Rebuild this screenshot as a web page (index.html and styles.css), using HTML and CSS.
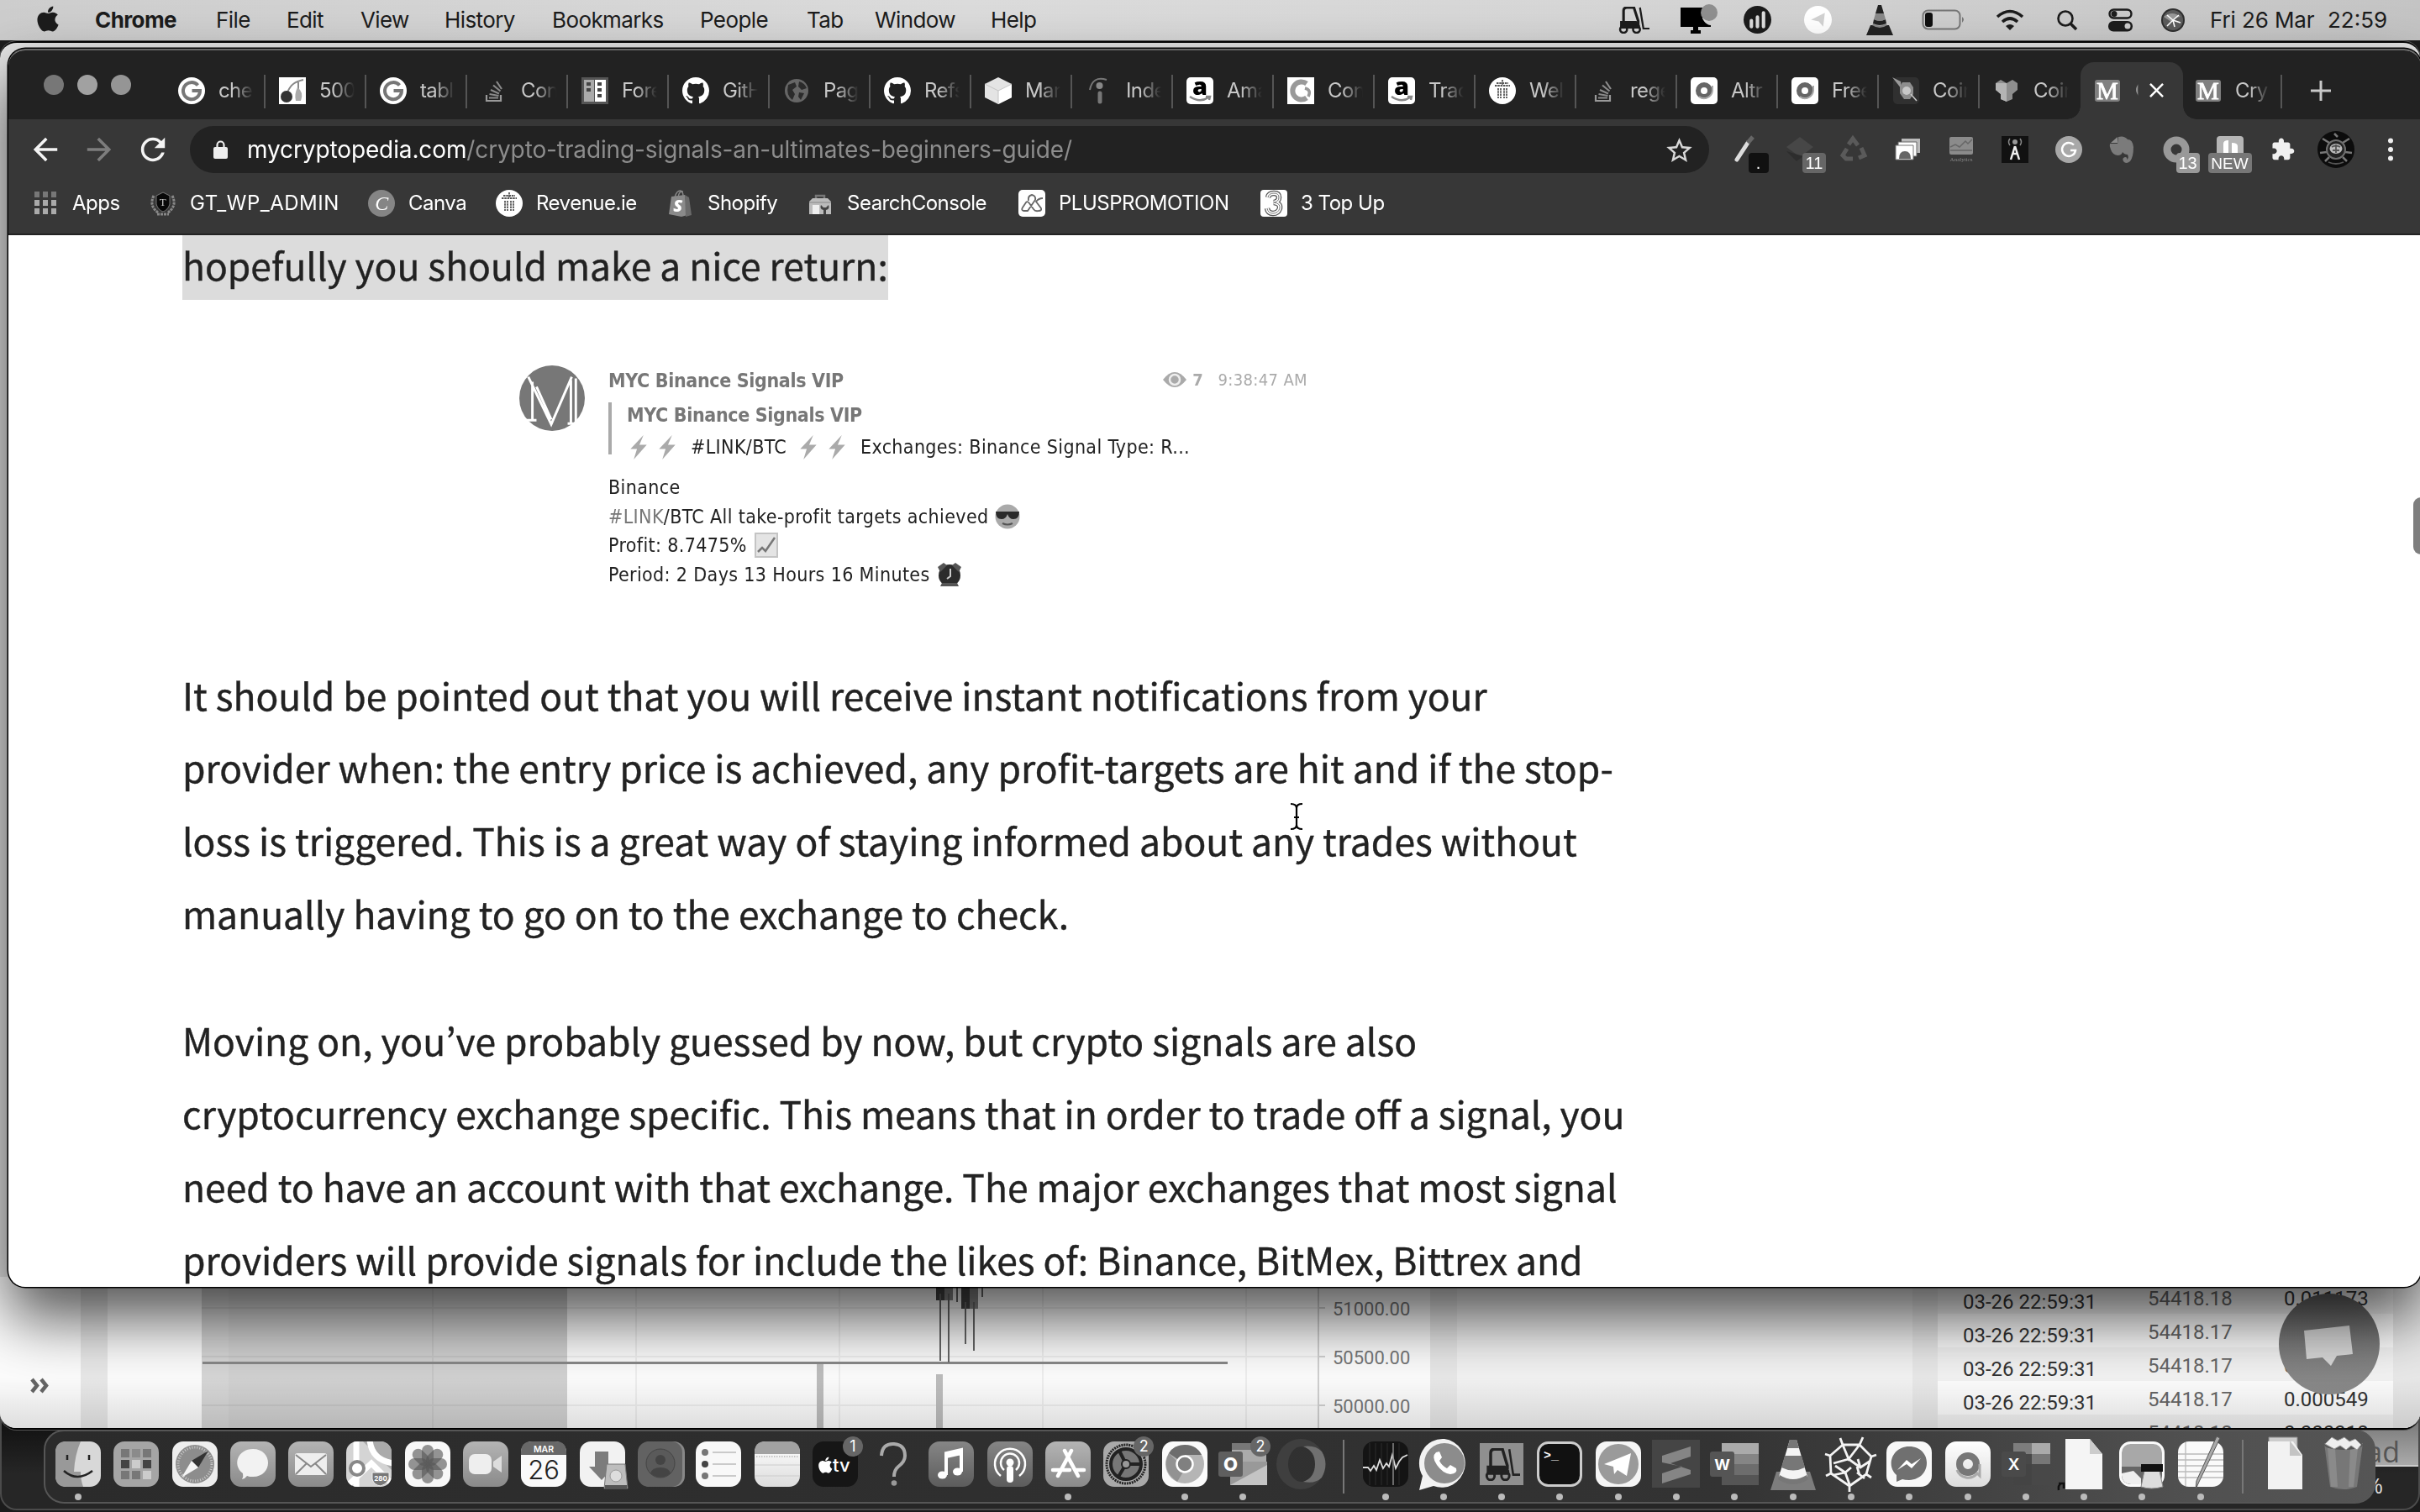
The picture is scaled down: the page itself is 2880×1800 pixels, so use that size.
FILE: index.html
```html
<!DOCTYPE html>
<html lang="en">
<head>
<meta charset="utf-8">
<title>Crypto Trading Signals</title>
<link rel="stylesheet" href="styles.css">
</head>
<body>
<svg class="defs" width="0" height="0">
<defs>
<linearGradient id="gTile" x1="0" y1="0" x2="0" y2="1"><stop offset="0" stop-color="#b4b4b4"/><stop offset="1" stop-color="#8a8a8a"/></linearGradient>
<linearGradient id="gMid" x1="0" y1="0" x2="0" y2="1"><stop offset="0" stop-color="#868686"/><stop offset="1" stop-color="#5c5c5c"/></linearGradient>
<linearGradient id="gLight" x1="0" y1="0" x2="0" y2="1"><stop offset="0" stop-color="#fff"/><stop offset="1" stop-color="#dcdcdc"/></linearGradient>
<linearGradient id="gChat" x1="0" y1="0" x2="0" y2="1"><stop offset="0" stop-color="#5e5e5e"/><stop offset=".5" stop-color="#7b7b7b"/><stop offset="1" stop-color="#8c8c8c"/></linearGradient>
<path id="apple" d="M318.7 268.7c-.2-36.7 16.4-64.4 50-84.8-18.8-26.9-47.2-41.7-84.7-44.6-35.5-2.8-74.3 20.7-88.5 20.7-15 0-49.4-19.7-76.4-19.7C63.3 141.2 4 184.8 4 273.5q0 39.3 14.4 81.2c12.8 36.7 59 126.7 107.2 125.2 25.2-.6 43-17.9 75.8-17.9 31.8 0 48.3 17.9 76.4 17.9 48.6-.7 90.4-82.5 102.6-119.3-65.2-30.7-61.7-90-61.7-91.9zm-56.6-164.2c27.3-32.4 24.8-61.9 24-72.5-24.1 1.4-52 16.4-67.9 34.9-17.5 19.8-27.8 44.3-25.6 71.9 26.1 2 49.9-11.4 69.5-34.3z"/>
<symbol id="f-google" viewBox="0 0 32 32"><circle cx="16" cy="16" r="16" fill="#fff"/><path d="M23.5 9.5A10 10 0 1 0 26 16h-9.500" fill="none" stroke="#777" stroke-width="4"/></symbol>
<symbol id="f-cherry" viewBox="0 0 32 32"><path fill="#fff" d="M0 0h32v32H0z"/><path d="M10 18C14 8 20 5 29 3M23 6v14" fill="none" stroke="#888" stroke-width="2"/><circle cx="9" cy="23" r="7" fill="#333"/><path d="M22 12q8 6 4 16h-6q-2-8 2-16z" fill="#aaa"/></symbol>
<symbol id="f-stack" viewBox="0 0 32 32"><path d="M7 21v7h17v-7" fill="none" stroke="#999" stroke-width="2.200"/><path d="M10 24.500h11M10.500 20l11 2M12 15l10 4.500M15 9.500l8.500 7M19 5l6 9" stroke="#8a8a8a" stroke-width="2.200"/></symbol>
<symbol id="f-forex" viewBox="0 0 32 32"><path fill="#555" d="M0 0h32v32H0z"/><path fill="#aaa" d="M3 3h12v26H3z"/><path fill="#fff" d="M16 3h13v26H16z"/><path fill="#444" d="M6 6h5v4H6zM6 13h5v4H6zM19 6h5v4h-5zM19 13h5v4h-5zM19 20h5v4h-5z"/></symbol>
<symbol id="f-github" viewBox="0 0 16 16"><path fill="#fff" d="M8 0C3.580 0 0 3.580 0 8c0 3.540 2.290 6.530 5.470 7.590.4.070.55-.17.55-.38 0-.19-.01-.82-.01-1.490-2.010.37-2.530-.49-2.690-.94-.09-.23-.48-.94-.82-1.130-.28-.15-.68-.52-.01-.53.63-.01 1.080.58 1.230.82.72 1.210 1.870.87 2.330.66.070-.52.28-.87.510-1.070-1.780-.2-3.640-.89-3.640-3.950 0-.87.31-1.590.82-2.150-.08-.2-.36-1.020.080-2.120 0 0 .67-.21 2.200.82.64-.18 1.320-.27 2-.27s1.360.090 2 .27c1.530-1.040 2.200-.82 2.200-.82.44 1.100.160 1.920.080 2.120.51.560.82 1.270.82 2.150 0 3.070-1.870 3.750-3.650 3.950.29.25.54.73.54 1.480 0 1.070-.01 1.930-.01 2.200 0 .21.15.46.55.38A8.010 8.010 0 0 0 16 8c0-4.420-3.580-8-8-8z"/></symbol>
<symbol id="f-globe" viewBox="0 0 32 32"><circle cx="16" cy="16" r="14" fill="#666"/><path d="M6 9l8-3 2 5-5 4 3 5-3 7q-8-6-5-18zM19 5q7 2 9 8l-6 2-4-4zM19 18l6 1-4 8-3-4z" fill="#2b2b2b"/></symbol>
<symbol id="f-cube" viewBox="0 0 32 32"><path d="M16 0l16 8v16l-16 8L0 24V8z" fill="#e4e4e4"/><path d="M16 16l16-8v16l-16 8z" fill="#fff"/><path d="M0 8l16 8L32 8M16 16v16" fill="none" stroke="#c4c4c4"/></symbol>
<symbol id="f-indeed" viewBox="0 0 32 32"><circle cx="16.500" cy="10" r="4" fill="#888"/><path d="M17 19v10" stroke="#777" stroke-width="5" stroke-linecap="round"/><path d="M5 15Q8-2 25 3" fill="none" stroke="#777" stroke-width="2"/></symbol>
<symbol id="f-amazon" viewBox="0 0 32 32"><rect width="32" height="32" rx="5" fill="#fff"/><text x="16" y="21" text-anchor="middle" font-family="Open Sans" font-weight="800" font-size="29">a</text><path d="M4 23q12 8 22 1M23 23l5 0-1 4" fill="none" stroke="#888" stroke-width="2.500"/></symbol>
<symbol id="f-conv" viewBox="0 0 32 32"><path fill="#fff" d="M0 0h32v32H0z"/><path d="M23 7.500a10.500 10.500 0 1 0 0 17" fill="none" stroke="#999" stroke-width="6"/><path d="M21 13q8 2 4 10" fill="none" stroke="#999" stroke-width="3.500"/></symbol>
<symbol id="f-harp" viewBox="0 0 32 32"><circle cx="16" cy="16" r="16" fill="#fff"/><path d="M7 10h18M9 7h14M11 13v12M14 13v12M18 13v12M21 13v12M16 3v6" stroke="#555" stroke-width="1.800" stroke-dasharray="2.500 .8"/></symbol>
<symbol id="f-altr" viewBox="0 0 32 32"><rect width="32" height="32" rx="5" fill="#fff"/><circle cx="16" cy="16" r="7" fill="none" stroke="#666" stroke-width="6"/><path d="M10 23a10 10 0 0 0 16-7v-6" fill="none" stroke="#aaa" stroke-width="2"/></symbol>
<symbol id="f-coin" viewBox="0 0 32 32"><rect x="1" width="31" height="32" rx="5" fill="#303030"/><path d="M0 0l10 5 1 9z" fill="#999"/><path d="M12 6h9l4 6v8l-4 6h-7l-5-7V11z" fill="#8d8d8d"/><circle cx="17" cy="16" r="5" fill="#c8c8c8"/><path d="M22 20l7 8" stroke="#ccc" stroke-width="1.500"/></symbol>
<symbol id="f-shield" viewBox="0 0 32 32"><path d="M3 7l6-4 7 4 7-4 6 4v8l-6 5v6l-7 3-7-3v-6l-6-5z" fill="#8e8e8e"/><path d="M16 7v22l-7-3v-6l-6-5V7z" fill="#b4b4b4"/></symbol>
<symbol id="f-m" viewBox="0 0 32 32"><rect x="1" y="3" width="30" height="26" rx="3" fill="#808080"/><text x="16" y="26" text-anchor="middle" font-family="Liberation Serif" font-size="29" fill="#fff" stroke="#fff" stroke-width=".8">M</text></symbol>
<symbol id="forklift" viewBox="0 0 36 32" preserveAspectRatio="none"><path d="M6 20V5q0-4 4-4h8l5 16v4" fill="none" stroke="currentColor" stroke-width="3"/><path d="M2 17h19l4 5v4H2z" fill="currentColor"/><circle cx="6" cy="27" r="4" fill="none" stroke="currentColor" stroke-width="2.500"/><circle cx="21" cy="27" r="4" fill="none" stroke="currentColor" stroke-width="2.500"/><path d="M25 1l4 25h7" fill="none" stroke="currentColor" stroke-width="2.200"/></symbol>
</defs>
</svg>

<header class="menubar">
  <svg class="apple" viewBox="0 24 384 464" fill="#1c1c1c"><use href="#apple"/></svg>
  <nav class="menus"><b>Chrome</b><span>File</span><span>Edit</span><span>View</span><span>History</span><span>Bookmarks</span><span>People</span><span>Tab</span><span>Window</span><span>Help</span></nav>
  <div class="status">
    <svg width="37" height="32" class="dark"><use href="#forklift"/></svg>
    <svg width="46" height="36" viewBox="0 0 46 36"><path d="M1 3h26v13q4 8 10 8v2H22v4h3v4H13v-4h3v-4H1z"/><circle cx="35" cy="9" r="10" fill="#8f8f8f"/></svg>
    <svg width="33" height="33" viewBox="0 0 32 32"><circle cx="16" cy="16" r="16" fill="#1c1c1c"/><path d="M9 17v7M16 13v11M23 8v16" stroke="#ddd" stroke-width="4" stroke-linecap="round"/></svg>
    <svg width="33" height="33" viewBox="0 0 32 32"><circle cx="16" cy="16" r="16" fill="#fff"/><path d="M8 16l16-8-2 16-5-6z" fill="#d2d2d2"/></svg>
    <svg width="32" height="36" viewBox="0 0 32 36"><path d="M14 0h4l3 10H11zM9 17l-1 5q8 4 16 0l-1-5q-7 3-14 0z" fill="#222"/><path d="M11 10h10l2 7q-7 4-14 0zM8 22q8 5 16 0l1 3q-9 5-18 0z" fill="#888"/><path d="M5 24h2q9 6 18 0h2l5 12H0z" fill="#222"/></svg>
    <svg width="52" height="26" viewBox="0 0 52 26"><rect x="1.500" y="1.500" width="44" height="22" rx="6" fill="none" stroke="#777" stroke-width="2"/><rect x="4" y="4" width="9" height="17" rx="3" fill="#111"/><path d="M48 9q4 3 0 7z" fill="#777"/></svg>
    <svg width="34" height="26" viewBox="0 0 34 26" fill="none" stroke="#1c1c1c" stroke-width="3.600"><path d="M2 9Q17-4 32 9M8 15q9-8 18 0"/><path d="M17 25l-5-5q5-4 10 0z" fill="#1c1c1c" stroke="none"/></svg>
    <svg width="26" height="26" viewBox="0 0 26 26" fill="none" stroke="#1c1c1c" stroke-width="2.600"><circle cx="11" cy="11" r="8.500"/><path d="M17 17l7 7" stroke-width="3.500"/></svg>
    <svg width="29" height="28" viewBox="0 0 29 28"><rect x="1.500" y="1.500" width="26" height="10" rx="5" fill="none" stroke="#1c1c1c" stroke-width="2.400"/><circle cx="7" cy="6.500" r="3.500" fill="#1c1c1c"/><rect y="15" width="29" height="12.500" rx="6" fill="#1c1c1c"/><circle cx="23" cy="21" r="3.500" fill="#ccc"/></svg>
    <svg width="30" height="28" viewBox="0 0 30 28"><circle cx="15" cy="14" r="14" fill="#2e2e2e"/><circle cx="15" cy="14" r="12" fill="#5c5c5c"/><path d="M4 10q10-8 20 0-8 0-11 6z" fill="#999"/><path d="M15 14L8 8M15 14l7-6M15 14l-7 7M15 14l2 8M15 14l9 3" stroke="#fff" stroke-width="1.600"/></svg>
    <span class="date">Fri 26 Mar</span><span class="time">22:59</span>
  </div>
</header>

<main class="desktop">
  <div class="under-window"></div>
  <div class="corner"><p>ad</p><p class="pct">%</p></div>

  <section class="back-window">
    <svg class="chart" viewBox="0 1520 2880 180">
      <path fill="#fcfcfc" d="M0 1520h2880v180H0z"/>
      <path fill="#e8e8e8" d="M96 1520h32v180H96zM1702 1520h32v180h-32zM2276 1520h30v180h-30zM2848 1520h32v180h-32z"/>
      <path fill="#f2f2f2" d="M1734 1520h542v180h-542zM2306 1604h542v40h-542zM2306 1684h542v16h-542zM2306 1520h542v44h-542z"/>
      <path stroke="#eee" stroke-width="2" d="M515 1520v180M757 1520v180M999 1520v180M1241 1520v180M1483 1520v180M240 1557h1329M240 1615h1329M240 1673h1329"/>
      <path fill="#000" fill-opacity=".15" d="M240 1520h435v180H240z"/>
      <path fill="#000" fill-opacity=".02" d="M272 1520h403v180H272z"/>
      <path stroke="#888" stroke-width="3" d="M241 1622.500h1220"/>
      <path stroke="#d0d0d0" stroke-width="2" d="M1569 1520v180M1569 1557h8M1569 1615h8M1569 1673h8"/>
      <path fill="#bdbdbd" d="M972 1624h8v76h-8zM1114 1636h8v64h-8z"/>
      <path fill="#444" d="M1114 1520h10v28h-10zM1144 1520h10v38h-10z"/>
      <path fill="#858585" d="M1124 1520h10v28h-10zM1154 1520h10v38h-10z"/>
      <path stroke="#666" stroke-width="2" d="M1119 1540v80M1129 1540v82M1149 1550v50M1159 1550v58M1139 1520v30M1169 1520v24"/>
      <g class="axis"><text x="1586" y="1566">51000.00</text><text x="1586" y="1624">50500.00</text><text x="1586" y="1682">50000.00</text></g>
      <g class="trades"><text x="2336" y="1558">03-26 22:59:31</text><text x="2336" y="1598">03-26 22:59:31</text><text x="2336" y="1638">03-26 22:59:31</text><text x="2336" y="1678">03-26 22:59:31</text>
      <text x="2718" y="1554">0.011173</text><text x="2718" y="1634">0.000549</text><text x="2718" y="1674">0.000549</text><text x="2718" y="1714">0.000318</text></g>
      <g class="trades price"><text x="2556" y="1554">54418.18</text><text x="2556" y="1594">54418.17</text><text x="2556" y="1634">54418.17</text><text x="2556" y="1674">54418.17</text><text x="2556" y="1714">54418.18</text></g>
      <path d="M38 1642l6 7.500-6 7.500M49 1642l6 7.500-6 7.500" fill="none" stroke="#666" stroke-width="4.500"/>
      <circle cx="2772" cy="1600" r="60" fill="url(#gChat)"/>
      <path d="M2742 1584l54-6 4 34-19 2-7 12-10-10-19 2z" fill="#d6d6d6"/>
    </svg>
  </section>

  <section class="browser">
    <div class="tabs">
      <div class="lights"><i></i><i></i><i></i></div>
      <div class="tab"><svg><use href="#f-google"/></svg><span>che</span></div>
      <div class="tab"><svg><use href="#f-cherry"/></svg><span>500</span></div>
      <div class="tab"><svg><use href="#f-google"/></svg><span>tabl</span></div>
      <div class="tab"><svg><use href="#f-stack"/></svg><span>Con</span></div>
      <div class="tab"><svg><use href="#f-forex"/></svg><span>Fore</span></div>
      <div class="tab"><svg><use href="#f-github"/></svg><span>GitH</span></div>
      <div class="tab"><svg><use href="#f-globe"/></svg><span>Pag</span></div>
      <div class="tab"><svg><use href="#f-github"/></svg><span>Refs</span></div>
      <div class="tab"><svg><use href="#f-cube"/></svg><span>Mar</span></div>
      <div class="tab"><svg><use href="#f-indeed"/></svg><span>Inde</span></div>
      <div class="tab"><svg><use href="#f-amazon"/></svg><span>Ama</span></div>
      <div class="tab"><svg><use href="#f-conv"/></svg><span>Con</span></div>
      <div class="tab"><svg><use href="#f-amazon"/></svg><span>Trac</span></div>
      <div class="tab"><svg><use href="#f-harp"/></svg><span>Wel</span></div>
      <div class="tab"><svg><use href="#f-stack"/></svg><span>rege</span></div>
      <div class="tab"><svg><use href="#f-altr"/></svg><span>Altr</span></div>
      <div class="tab"><svg><use href="#f-altr"/></svg><span>Free</span></div>
      <div class="tab"><svg><use href="#f-coin"/></svg><span>Coin</span></div>
      <div class="tab last"><svg><use href="#f-shield"/></svg><span>Coin</span></div>
      <div class="tab active"><svg><use href="#f-m"/></svg><span>C</span><svg class="x" viewBox="0 0 18 18"><path d="M1 1l16 16M17 1L1 17" stroke="#fff" stroke-width="2.600"/></svg></div>
      <div class="tab"><svg><use href="#f-m"/></svg><span>Cry</span></div>
      <svg class="plus" viewBox="0 0 24 24"><path d="M12 0v24M0 12h24" stroke="#c8c8c8" stroke-width="3"/></svg>
    </div>

    <div class="toolbar">
      <div class="nav">
        <svg viewBox="3 3 18 18" fill="#f4f4f4"><path d="M20 11H7.830l5.590-5.590L12 4l-8 8 8 8 1.410-1.410L7.830 13H20v-2z"/></svg>
        <svg viewBox="3 3 18 18" fill="#7d7d7d"><path d="M4 13h12.170l-5.590 5.590L12 20l8-8-8-8-1.410 1.410L16.170 11H4v2z"/></svg>
        <svg viewBox="3 3 18 18" fill="#f4f4f4"><path d="M17.650 6.350C16.200 4.900 14.210 4 12 4c-4.420 0-7.990 3.580-7.990 8s3.570 8 7.990 8c3.730 0 6.840-2.550 7.730-6h-2.080c-.82 2.330-3.040 4-5.650 4-3.310 0-6-2.690-6-6s2.690-6 6-6c1.660 0 3.140.69 4.220 1.780L13 11h7V4l-2.350 2.350z"/></svg>
      </div>
      <div class="omnibox">
        <svg width="17" height="22" viewBox="0 0 17 22"><path d="M4.500 9V5.500a4 4 0 0 1 8 0V9" fill="none" stroke="#eee" stroke-width="2.200"/><rect y="8" width="17" height="14" rx="2" fill="#eee"/></svg>
        <p class="url"><span class="host">mycryptopedia.com</span>/crypto-trading-signals-an-ultimates-beginners-guide/</p>
        <svg class="star" viewBox="2 2 20 19" fill="#d8d8d8"><path d="M22 9.240l-7.190-.62L12 2 9.190 8.630 2 9.240l5.460 4.730L5.820 21 12 17.270 18.180 21l-1.630-7.030L22 9.240zM12 15.400l-3.760 2.270 1-4.280-3.320-2.880 4.380-.38L12 6.100l1.710 4.040 4.380.38-3.320 2.880 1 4.280L12 15.400z"/></svg>
      </div>
      <div class="exts">
        <div class="ext"><svg viewBox="0 0 32 32"><path d="M5 28L18 8" stroke="#ddd" stroke-width="5" stroke-linecap="round"/><path d="M18 8l6-7" stroke="#666" stroke-width="5"/></svg><em class="black">.</em></div>
        <div class="ext"><svg viewBox="0 0 32 32"><path d="M16 1l16 12-16 12L0 13z" fill="#474747"/><path d="M0 18l12 12 8-6-20-6z" fill="#2d2d2d"/></svg><em>11</em></div>
        <div class="ext"><svg viewBox="0 0 32 32" fill="none" stroke="#5a5a5a" stroke-width="5"><path d="M10 10l5-7 6 8M25 14l4 9-7 3M8 15l-5 8 4 4h8"/></svg></div>
        <div class="ext"><svg viewBox="0 0 32 32"><path fill="#bbb" d="M9 3h22v17H9z"/><path fill="#fff" stroke="#666" d="M5 7h22v17H5z"/><path fill="#fff" stroke="#777" d="M2 11h21v17H2z"/><path d="M6 27q0-9 7-9t7 9z" fill="#666"/></svg></div>
        <div class="ext"><svg viewBox="0 0 32 32"><rect x="2" y="1" width="28" height="21" rx="2" fill="#8b8b8b"/><path d="M3 13l6-3 5 3 7-7 3 3 5-5M3 17h26" fill="none" stroke="#666" stroke-width="1.500"/><text x="16" y="30" text-anchor="middle" font-family="Liberation Serif" font-size="7" fill="#888">Analytics</text></svg></div>
        <div class="ext"><svg viewBox="0 0 32 32"><path fill="#111" d="M0 0h32v32H0z"/><path d="M16 12l-5 16M16 12l5 16M13 21h6" stroke="#eee" stroke-width="2.500"/><path d="M10 3q-3 4 0 8M22 3q3 4 0 8" fill="none" stroke="#888" stroke-width="1.500"/><circle cx="16" cy="7" r="3" fill="#999"/></svg></div>
        <div class="ext"><svg viewBox="0 0 32 32"><circle cx="16" cy="16" r="16" fill="#a8a8a8"/><path d="M22 10.500a8 8 0 1 0 2 6.500h-6" fill="none" stroke="#fff" stroke-width="2.500"/></svg></div>
        <div class="ext"><svg viewBox="0 0 32 32"><path d="M11 1q7-2 11 3 6 0 7 9 0 12-4 17-5 4-8 0-2-4 2-5 3 0 2 3 3-2 1-6-4 0-6-3-1 4-6 4-6-1-8-7-2-4-1-7h9z" fill="#7b7b7b"/><path d="M2 8l8-7v7z" fill="#8b8b8b"/></svg></div>
        <div class="ext"><svg viewBox="0 0 32 32"><circle cx="16" cy="16" r="11" fill="none" stroke="#999" stroke-width="9"/></svg><em class="light">13</em></div>
        <div class="ext"><svg viewBox="0 0 32 32"><rect width="32" height="32" rx="4" fill="#b5b5b5"/><path d="M8 22V9q0-4 6-4v17zM18 22V8q7 0 7 4v10z" fill="#fff"/></svg><em class="new">NEW</em></div>
        <div class="ext"><svg viewBox="0 -1 26 26"><path fill="#f0f0f0" d="M20.500 11H19V7c0-1.100-.9-2-2-2h-4V3.500C13 2.120 11.880 1 10.500 1S8 2.120 8 3.500V5H4c-1.100 0-1.990.9-1.990 2v3.800H3.500c1.490 0 2.700 1.210 2.700 2.700s-1.210 2.700-2.700 2.700H2V20c0 1.100.9 2 2 2h3.800v-1.500c0-1.490 1.210-2.700 2.700-2.700 1.490 0 2.700 1.210 2.700 2.700V22H17c1.100 0 2-.9 2-2v-4h1.500c1.380 0 2.500-1.120 2.500-2.500S21.880 11 20.500 11z"/></svg></div>
      </div>
      <svg class="avatar" viewBox="0 0 44 44"><circle cx="22" cy="22" r="22" fill="#0c0c0c"/><path d="M6 9l8 5M38 9l-8 5M3 26l8-1M41 26l-8-1M20 3l4 4M9 36l5-5M35 36l-5-5" stroke="#777" stroke-width="2.500"/><circle cx="22" cy="22" r="11" fill="#222" stroke="#6e6e6e" stroke-width="2"/><ellipse cx="22" cy="21" rx="7.500" ry="6" fill="#bbb"/><path d="M17 19q5-3 10 0M18 23h8M22 16v10M13 37q9 4 18 0" fill="none" stroke="#555" stroke-width="1.800"/></svg>
      <svg class="kebab" viewBox="0 0 6 28" fill="#f0f0f0"><circle cx="3" cy="3.500" r="3"/><circle cx="3" cy="14" r="3"/><circle cx="3" cy="24.500" r="3"/></svg>
    </div>

    <div class="bookmarks">
      <div class="bm b1"><svg viewBox="0 0 32 32"><path fill="#777" d="M3 2h6v7H3zM13 2h6v7h-6zM23 2h6v7h-6z"/><path fill="#aaa" d="M3 12h6v7H3zM13 12h6v7h-6zM23 12h6v7h-6zM3 22h6v7H3zM13 22h6v7h-6zM23 22h6v7h-6z"/></svg><span>Apps</span></div>
      <div class="bm b2"><svg viewBox="0 0 32 32"><path d="M5 7q-6 12 5 20M27 7q6 12-5 20M9 29h14" fill="none" stroke="#888" stroke-width="3" stroke-dasharray="3 1"/><path d="M8 7l8-4 8 4v10q-2 7-8 9-6-2-8-9z" fill="#080808" stroke="#777"/><text x="16" y="19" text-anchor="middle" font-family="Liberation Serif" font-size="13" fill="#ccc">T</text></svg><span>GT_WP_ADMIN</span></div>
      <div class="bm b3"><svg viewBox="0 0 32 32"><circle cx="16" cy="16" r="16" fill="#858585"/><text x="16" y="24" text-anchor="middle" font-family="Liberation Serif" font-style="italic" font-size="24" fill="#fff">C</text></svg><span>Canva</span></div>
      <div class="bm b4"><svg><use href="#f-harp"/></svg><span>Revenue.ie</span></div>
      <div class="bm b5"><svg viewBox="0 0 32 32"><path d="M5 8l16-2 3 24-7 2-15-3z" fill="#8a8a8a"/><path d="M21 6l5 3 3 21-7 2z" fill="#6a6a6a"/><path d="M9 9q2-8 7-8 3 1 3 7M13 9q1-8 6-7" fill="none" stroke="#888" stroke-width="1.500"/><text x="12.500" y="26" text-anchor="middle" font-family="Open Sans" font-style="italic" font-weight="800" font-size="20" fill="#fff">S</text></svg><span>Shopify</span></div>
      <div class="bm b6"><svg viewBox="0 0 32 32"><path d="M11 10V7h10v3" fill="none" stroke="#777" stroke-width="2.500"/><path d="M3 14l4-4h18l4 4v15H3z" fill="#bbb"/><path d="M7 18h8v11H7z" fill="#eee"/><path d="M3 15h26" stroke="#888"/><path d="M17 18q-2 5 3 6v5h3v-5q5-1 3-6l-3 3h-3z" fill="#444"/></svg><span>SearchConsole</span></div>
      <div class="bm b7"><svg viewBox="0 0 32 32"><rect width="32" height="32" rx="5" fill="#fff"/><path d="M12 13q-1-6 4-7 5 1 4 6l-9 13H6q-3-1-1-4l4-6q2-2 4 1l5 7q2 3 6 2 4 0 3-3l-6-8q3-4 8-4" fill="none" stroke="#666" stroke-width="1.800"/></svg><span>PLUSPROMOTION</span></div>
      <div class="bm b8"><svg viewBox="0 0 32 32"><rect width="32" height="32" rx="4" fill="#fff"/><path d="M9 9q1-5 7-5t6 5q0 5-6 6 8 1 7 7-2 6-8 6t-7-6" fill="none" stroke="#555" stroke-width="6.500"/><path d="M9 9q1-5 7-5t6 5q0 5-6 6 8 1 7 7-2 6-8 6t-7-6" fill="none" stroke="#fff" stroke-width="4"/><path d="M9 9q1-5 7-5t6 5q0 5-6 6 8 1 7 7-2 6-8 6t-7-6" fill="none" stroke="#777" stroke-width="1"/></svg><span>3 Top Up</span></div>
    </div>

    <article class="page">
      <p class="lead"><mark>hopefully you should make a nice return:</mark></p>
      <figure class="msg">
        <svg class="logo" viewBox="0 0 80 80"><circle cx="40" cy="40" r="40" fill="#777"/><path d="M16 66V20M11 14l28 58 25-58M21 26l18 40M63 18v53M69 16v54M9 67h12M59 71h13" fill="none" stroke="#fff" stroke-width="3"/></svg>
        <div class="body">
          <div class="head"><b>MYC Binance Signals VIP</b><span class="meta"><svg width="30" height="22" viewBox="0 0 30 22"><path d="M1 11Q15-7 29 11 15 29 1 11z" fill="#aaa"/><circle cx="15" cy="11" r="6" fill="#aaa" stroke="#eee" stroke-width="2.500"/></svg><b>7</b><span>9:38:47 AM</span></span></div>
          <div class="quote"><b>MYC Binance Signals VIP</b><p><i class="bolts"><svg viewBox="0 0 28 32"><path d="M20 1L4 18h8L8 31l16-18h-9z"/></svg><svg viewBox="0 0 28 32"><path d="M20 1L4 18h8L8 31l16-18h-9z"/></svg></i><span class="lk">#LINK/BTC</span><i class="bolts"><svg viewBox="0 0 28 32"><path d="M20 1L4 18h8L8 31l16-18h-9z"/></svg><svg viewBox="0 0 28 32"><path d="M20 1L4 18h8L8 31l16-18h-9z"/></svg></i><span>Exchanges: Binance Signal Type: R...</span></p></div>
          <p class="row">Binance</p>
          <p class="row"><span><span class="hash">#LINK</span>/BTC All take-profit targets achieved</span><svg viewBox="0 0 30 30"><circle cx="15" cy="15" r="14.500" fill="#aaa"/><path d="M1 9h28q0 9-7 9-5 0-7-6-2 6-7 6-7 0-7-9z" fill="#2a2a2a"/><path d="M9 23q6 3 12 0" stroke="#555" fill="none" stroke-width="2"/></svg></p>
          <p class="row"><span>Profit: 8.7475%</span><svg viewBox="0 0 30 30"><path d="M2 1h26v28H2z" fill="#e4e4e4" stroke="#c4c4c4" stroke-width="2"/><path d="M5 23l5-5 4 4L25 6" stroke="#777" fill="none" stroke-width="2.500"/></svg></p>
          <p class="row"><span>Period: 2 Days 13 Hours 16 Minutes</span><svg viewBox="0 0 30 30"><circle cx="15" cy="16" r="13" fill="#2c2c2c"/><path d="M1 6l7-5 4 3-8 8zM29 6l-7-5-4 3 8 8zM6 25l-2 4h22l-2-4z" fill="#555"/><path d="M16 8v9l-4 3" stroke="#ccc" fill="none" stroke-width="2"/></svg></p>
        </div>
      </figure>
      <p>It should be pointed out that you will receive instant notifications from your<br>provider when: the entry price is achieved, any profit-targets are hit and if the stop-<br>loss is triggered. This is a great way of staying informed about any trades without<br>manually having to go on to the exchange to check.</p>
      <p>Moving on, you’ve probably guessed by now, but crypto signals are also<br>cryptocurrency exchange specific. This means that in order to trade off a signal, you<br>need to have an account with that exchange. The major exchanges that most signal<br>providers will provide signals for include the likes of: Binance, BitMex, Bittrex and</p>
      <div class="thumb"></div>
    </article>
  </section>

  <svg class="cursor" viewBox="0 0 18 34" fill="none" stroke="#000" stroke-width="2.200"><path d="M2 2q7 0 7 5v20q0 5-7 5M16 2q-7 0-7 5M16 32q-7 0-7-5M6 18h6"/></svg>

  <footer class="dock">
    <div class="app run"><svg viewBox="0 0 54 54"><rect width="54" height="54" rx="13" fill="#d8d8d8"/><path d="M30 0H13Q0 0 0 13v28q0 13 13 13h20q-3-8-3-18h-8Q23 16 30 0z" fill="#999"/><path d="M14 16v6M40 16v6M10 35q16 14 34 0" fill="none" stroke="#222" stroke-width="2.500"/></svg></div>
    <div class="app"><svg viewBox="0 0 54 54"><rect width="54" height="54" rx="13" fill="#a5a5a5"/><path fill="#777" d="M9 9h10v10H9zM35 9h10v10H35zM22 35h10v10H22zM9 35h10v10H9z"/><path fill="#ccc" d="M22 22h10v10H22zM35 35h10v10H35z"/><path fill="#444" d="M9 22h10v10H9zM35 22h10v10H35z"/><path fill="#8b8b8b" d="M22 9h10v10H22z"/></svg></div>
    <div class="app"><svg viewBox="0 0 54 54"><rect width="54" height="54" rx="13" fill="#eee"/><circle cx="27" cy="27" r="23" fill="#8d8d8d"/><circle cx="27" cy="27" r="20" fill="none" stroke="#ccc" stroke-width="3" stroke-dasharray="1 2"/><path d="M43 11L31 31l-8-8z" fill="#333"/><path d="M11 43l12-20 8 8z" fill="#f4f4f4"/></svg></div>
    <div class="app"><svg viewBox="0 0 54 54"><rect width="54" height="54" rx="13" fill="url(#gTile)"/><path d="M27 9c24 0 24 33 0 33-3 0-5 0-7-1q-2 3-6 4 2-3 1-7C2 28 9 9 27 9z" fill="#f2f2f2"/></svg></div>
    <div class="app"><svg viewBox="0 0 54 54"><rect width="54" height="54" rx="13" fill="url(#gTile)"/><rect x="8" y="14" width="38" height="26" rx="3" fill="#eee"/><path d="M9 16l18 14 18-14M9 39l13-13M45 39L32 26" fill="none" stroke="#888" stroke-width="2"/></svg></div>
    <div class="app"><svg class="clip" viewBox="0 0 54 54"><rect width="54" height="54" fill="#d4d4d4"/><path d="M20 0l34 34V0z" fill="#aaa"/><path d="M12 0v54M0 54l30-28L58 54M28-2q2 24 28 28" fill="none" stroke="#fff" stroke-width="7"/><circle cx="13" cy="32" r="8" fill="#fff" stroke="#888" stroke-width="4"/><path d="M31 37h20v8q-4 7-10 8-8-1-10-8z" fill="#777" stroke="#eee"/><text x="41" y="47" text-anchor="middle" font-family="Inter" font-weight="700" font-size="8" fill="#fff">280</text></svg></div>
    <div class="app"><svg viewBox="0 0 54 54"><rect width="54" height="54" rx="13" fill="#f8f8f8"/><g fill="#555" fill-opacity=".62"><rect id="petal" x="20" y="4" width="14" height="23" rx="7"/><use href="#petal" transform="rotate(45 27 27)"/><use href="#petal" transform="rotate(90 27 27)"/><use href="#petal" transform="rotate(135 27 27)"/><use href="#petal" transform="rotate(180 27 27)"/><use href="#petal" transform="rotate(225 27 27)"/><use href="#petal" transform="rotate(270 27 27)"/><use href="#petal" transform="rotate(315 27 27)"/></g></svg></div>
    <div class="app"><svg viewBox="0 0 54 54"><rect width="54" height="54" rx="13" fill="url(#gTile)"/><rect x="7" y="15" width="27" height="24" rx="7" fill="#eee"/><path d="M36 24l10-7v20l-10-7z" fill="#ddd"/></svg></div>
    <div class="app"><svg viewBox="0 0 54 54"><rect width="54" height="54" rx="13" fill="#fafafa"/><path d="M0 16v-3Q0 0 13 0h28q13 0 13 13v3z" fill="#686868"/><text x="27" y="13" text-anchor="middle" font-family="Inter" font-weight="600" font-size="10.500" fill="#fff">MAR</text><text x="27" y="45" text-anchor="middle" font-family="Inter" font-weight="300" font-size="31" fill="#222">26</text></svg></div>
    <div class="app"><svg viewBox="0 0 54 54"><rect width="54" height="54" rx="13" fill="#f2f2f2"/><path d="M18 12h16v18h7L26 46 11 30h7z" fill="#7c7c7c"/><path d="M32 27h22l3 29H29z" fill="#bdbdbd" stroke="#777"/><circle cx="43" cy="41" r="7" fill="#ddd" stroke="#999"/><path d="M30 52h26v4H30z" fill="#555"/></svg></div>
    <div class="app"><svg viewBox="0 0 54 54"><rect x="2" width="54" height="54" rx="13" fill="#888"/><rect width="53" height="54" rx="13" fill="#626262"/><circle cx="27" cy="26" r="17" fill="#5a5a5a" stroke="#444"/><circle cx="27" cy="22" r="6" fill="#444"/><path d="M15 38q2-7 12-7t12 7q-12 9-24 0z" fill="#444"/></svg></div>
    <div class="app"><svg viewBox="0 0 54 54"><rect width="54" height="54" rx="13" fill="#f8f8f8"/><circle cx="11" cy="13" r="4" fill="#777"/><circle cx="11" cy="27" r="4" fill="#444"/><circle cx="11" cy="41" r="4" fill="#777"/><path d="M20 13h28M20 27h28M20 41h28" stroke="#bbb" stroke-width="1.500"/></svg></div>
    <div class="app"><svg viewBox="0 0 54 54"><rect width="54" height="54" rx="13" fill="url(#gLight)"/><path d="M0 15v-2Q0 0 13 0h28q13 0 13 13v2z" fill="#a2a2a2"/><path d="M2 18h50" stroke="#999" stroke-dasharray="1.500 1.500"/><path d="M0 28h54M0 41h54" stroke="#ccc"/></svg></div>
    <div class="app"><svg viewBox="0 0 54 54"><rect width="54" height="54" rx="13" fill="#161616"/><g transform="translate(7 17) scale(.043)" fill="#fff"><use href="#apple"/></g><text x="24" y="36" font-family="Inter" font-weight="500" font-size="22" fill="#fff">tv</text></svg><em>1</em></div>
    <div class="app"><svg viewBox="0 0 54 54"><path d="M13 17Q14 2 28 3q13 1 13 14 0 7-8 13-5 4-5 12" fill="none" stroke="#aaa" stroke-width="4"/><circle cx="28" cy="49.500" r="3.300" fill="#999"/></svg></div>
    <div class="app"><svg viewBox="0 0 54 54"><rect width="54" height="54" rx="13" fill="url(#gMid)"/><path d="M21 40V14l18-4v26M21 18l18-4" fill="none" stroke="#fff" stroke-width="4"/><ellipse cx="16.500" cy="40" rx="5.500" ry="4.500" fill="#fff"/><ellipse cx="34.500" cy="36" rx="5.500" ry="4.500" fill="#fff"/></svg></div>
    <div class="app"><svg viewBox="0 0 54 54"><rect width="54" height="54" rx="13" fill="url(#gMid)"/><g fill="none" stroke="#fff" stroke-width="2.500"><path d="M16 41a18 18 0 1 1 22 0M20 34a11 11 0 1 1 14 0"/></g><circle cx="27" cy="25" r="4.500" fill="#fff"/><path d="M27 33v12" stroke="#fff" stroke-width="8" stroke-linecap="round"/></svg></div>
    <div class="app run"><svg viewBox="0 0 54 54"><rect width="54" height="54" rx="13" fill="url(#gTile)"/><path d="M31 11L15 41M23 11l16 30M9 34h20M36 34h10" stroke="#fff" stroke-width="4.500" stroke-linecap="round"/></svg></div>
    <div class="app"><svg viewBox="0 0 54 54"><rect width="54" height="54" rx="13" fill="#a9a9a9"/><circle cx="27" cy="27" r="23" fill="none" stroke="#222" stroke-width="3" stroke-dasharray="2 1"/><circle cx="27" cy="27" r="18" fill="#777" stroke="#222" stroke-width="4"/><path d="M27 27L19 11M27 27h18M27 27L18 42" stroke="#222" stroke-width="4"/><circle cx="27" cy="27" r="5" fill="#999" stroke="#222" stroke-width="2"/></svg><em>2</em></div>
    <div class="app run"><svg viewBox="0 0 54 54"><rect width="54" height="54" rx="13" fill="#fafafa"/><circle cx="27" cy="27" r="23" fill="#b5b5b5"/><path d="M27 27L8 14Q14 4 27 4q14 0 20 12H27z" fill="#6d6d6d"/><path d="M8 14q-10 20 10 34l9-15z" fill="#929292"/><circle cx="27" cy="27" r="9.500" fill="#808080" stroke="#fff" stroke-width="2.500"/></svg></div>
    <div class="app run"><svg viewBox="0 0 54 54"><path d="M14 2h41v22H14z" fill="#777"/><path d="M14 10h41v14H14z" fill="#aaa"/><path d="M12 24h44v28H12z" fill="#999"/><path d="M12 52l44-24v24z" fill="#c4c4c4"/><rect x="-2" y="12" width="29" height="30" rx="3" fill="#5f5f5f"/><text x="12.500" y="35" text-anchor="middle" font-family="Inter" font-weight="800" font-size="22" fill="#fff">O</text></svg><em>2</em></div>
    <div class="app"><svg viewBox="0 0 54 54"><path fill-rule="evenodd" d="M27-3a29 30 0 1 1 0 60 29 30 0 1 1 0-60zm1 9a16 21 0 1 0 0 42 16 21 0 1 0 0-42z" fill="#3f3f3f"/><path d="M30 6q14-2 22 6 9 15 0 31-8 8-22 5 14-5 14-21T30 6z" fill="#707070"/></svg></div>
    <hr>
    <div class="app run"><svg viewBox="0 0 54 54"><rect width="54" height="54" rx="13" fill="#141414"/><path d="M8 2v50M15 2v50M22 2v50M29 2v50M43 2v50" stroke="#2c2c2c"/><path d="M0 31h6l3 4 4-6 3 5 4-12 4 10 4-6 3 4 4-14 4 16 4-8 4-5 6-3" fill="none" stroke="#ddd" stroke-width="1.800"/><path d="M36 2v50" stroke="#888" stroke-width="1.500"/></svg></div>
    <div class="app run"><svg viewBox="0 0 54 54"><path d="M28-3A28 29 0 1 1 15 53L-2 58l4-17A28 29 0 0 1 28-3z" fill="#f2f2f2"/><circle cx="28" cy="26" r="24" fill="#8c8c8c"/><path d="M18 13q-6 5 1 15t16 11q9-1 7-7l-7-4-4 4q-6-3-9-9l3-4-3-7z" fill="#fff"/></svg></div>
    <div class="app run"><svg viewBox="0 0 54 54"><path d="M1 2h52v50H1z" fill="#8f8f8f"/><g color="#222"><use href="#forklift" x="7" y="8" width="42" height="39"/></g></svg></div>
    <div class="app run"><svg viewBox="0 0 54 54"><rect x="1.500" y="1.500" width="51" height="51" rx="12" fill="#111" stroke="#ccc" stroke-width="3"/><text x="8" y="21" font-family="Liberation Mono" font-weight="700" font-size="15" fill="#fff">&gt;_</text></svg></div>
    <div class="app run"><svg viewBox="0 0 54 54"><rect width="54" height="54" rx="13" fill="#f5f5f5"/><circle cx="27" cy="27" r="24" fill="#9a9a9a"/><path d="M10 27l32-13-5 27-11-7-4 5-1-9z" fill="#fff"/></svg></div>
    <div class="app run"><svg viewBox="0 0 54 54"><path d="M-2-2h57v57H-2z" fill="#454545"/><path d="M10 17l34-11v12L20 26l24 8v5L10 50V38l24-8-24-5z" fill="#858585"/></svg></div>
    <div class="app run"><svg viewBox="0 0 54 54"><path d="M12 2h44v13H12z" fill="#aaa"/><path d="M12 15h44v12H12z" fill="#858585"/><path d="M12 27h44v13H12z" fill="#6d6d6d"/><path d="M12 40h44v12H12z" fill="#555"/><rect x="-2" y="12" width="29" height="30" rx="3" fill="#555"/><text x="12.500" y="34" text-anchor="middle" font-family="Inter" font-weight="700" font-size="18" fill="#fff">W</text></svg></div>
    <div class="app run"><svg viewBox="0 0 54 54"><path d="M7 36h40l7 22H0z" fill="#7d7d7d"/><path d="M23-2h8l13 44q-17 14-34 0z" fill="#f4f4f4"/><path d="M23-2h8l3 10H20zM17 17h20l4 14q-14 7-28 0zM11 40q16 10 32 0l2 5q-18 12-36 0z" fill="#777"/></svg></div>
    <div class="app run"><svg viewBox="0 0 54 54" fill="none" stroke="#f4f4f4" stroke-width="2.800"><path d="M14-4l3 8h20l4-9M17 4L2 17l-6-2M2 17l1 21-6 3M3 38l22 15v7M25 53l20-14 6 4M45 39l6-21 6-2M51 18L37 4M17 4l7 17 13-17M24 21L6 26M24 21l14 10 12-8M38 31l-3-10M20 37L8 29M20 37l5 14M20 37l-14 3M20 37l7-6M34 37l9 7M34 30l3 10"/></svg></div>
    <div class="app run"><svg viewBox="0 0 54 54"><rect width="54" height="54" rx="13" fill="#f8f8f8"/><path d="M27 6c28 0 28 39 0 40q-5 0-8-1l-7 3v-8C-1 29 7 6 27 6z" fill="#707070"/><path d="M13 34l11-12 6 5 11-7-11 12-6-5z" fill="#fff"/></svg></div>
    <div class="app run"><svg viewBox="0 0 54 54"><rect width="54" height="54" rx="13" fill="url(#gLight)"/><circle cx="27" cy="27" r="10" fill="none" stroke="#777" stroke-width="8"/><path d="M14 34a14 14 0 0 0 24 4l3 3V27" fill="none" stroke="#aaa" stroke-width="3"/></svg></div>
    <div class="app run"><svg viewBox="0 0 54 54"><path d="M12 2h44v50H12z" fill="#484848"/><path d="M12 2h22v13H12z" fill="#7d7d7d"/><path d="M34 2h22v13H34z" fill="#aaa"/><path d="M34 15h22v12H34z" fill="#777"/><path d="M12 27h22v25H12z" fill="#444"/><rect x="-2" y="12" width="29" height="30" rx="3" fill="#4a4a4a"/><text x="12.500" y="34" text-anchor="middle" font-family="Inter" font-weight="600" font-size="19" fill="#fff">X</text></svg></div>
    <div class="app run"><svg viewBox="0 0 54 54"><path d="M5-3h29l15 18v42H5z" fill="#f5f5f5"/><path d="M34-3v18h15z" fill="#ccc"/><path d="M-3 58q-1-6 3-8M-3 50h6v6" stroke="#111" fill="none" stroke-width="2.500"/></svg></div>
    <div class="app run"><svg viewBox="0 0 54 54"><rect x="1.500" y="1.500" width="51" height="51" rx="12" fill="#a8a8a8" stroke="#fafafa" stroke-width="3"/><path d="M3 30h48v11q-1 10-12 10H14Q3 50 3 40z" fill="#666"/><path d="M3 38l14-3 9 9v7H14Q3 50 3 40z" fill="#eee"/><path d="M30 35l-4 19q12 4 26 0l-4-19z" fill="#ddd" stroke="#888"/><path d="M26 27h26v9H26z" fill="#111"/></svg></div>
    <div class="app run"><svg viewBox="0 0 54 54"><rect width="54" height="54" rx="13" fill="#fafafa"/><path d="M0 15h54M0 22h54M0 29h54M0 36h54M0 43h54M9 1v52" stroke="#bbb" stroke-width="1.300"/><path d="M50-4L25 48l-4 9 1-10L46-6z" fill="#aaa" stroke="#555"/></svg></div>
    <hr>
    <div class="app"><svg viewBox="0 0 54 54"><path d="M8-5h34v14H8z" fill="#ccc" stroke="#888"/><path d="M7 0h30l11 16v41H7z" fill="#f2f2f2"/><path d="M33-1v18h14z" fill="#c4c4c4"/></svg></div>
    <div class="app"><svg viewBox="0 0 54 54"><path d="M5 2h46l-7 52q-16 6-32 0z" fill="#777"/><path d="M9 8h9l3 46h-8zM36 8h9l-5 46h-6z" fill="#8a8a8a"/><ellipse cx="28" cy="4" rx="23" ry="6" fill="#555"/><path d="M6 3l8-8 7 4 8-4 6 5 7-3 7 7-5 6-7-5-6 5-7-5-7 4z" fill="#eee" stroke="#999"/></svg></div>
  </footer>
</main>
</body>
</html>
```
FILE: styles.css
```css
* { box-sizing: border-box; margin: 0; padding: 0; }
html, body { width: 2880px; height: 1800px; overflow: hidden; }
body { font-family: Inter, "Liberation Sans", sans-serif; background: #1b1b1b; color: #1c1c1c; position: relative; }
svg { overflow: visible; flex: none; display: block; }
.defs { position: absolute; }

/* Menu bar */
.menubar { height: 48px; display: flex; align-items: center; padding-left: 44px; font-size: 26px; letter-spacing: -.6px;
  background: linear-gradient(90deg, #cdcdcd, #dbdbdb 40%, #d6d6d6 65%, #c4c4c4); }
.apple { width: 26px; height: 31px; margin: 0 43px 3px 0; }
.menus { display: flex; white-space: nowrap; padding-bottom: 1px; }
.menus > * { width: 84px; }
.menus b { width: 144px; font-weight: 700; }
.menus :nth-child(3) { width: 88px; }
.menus :nth-child(4) { width: 100px; }
.menus :nth-child(5) { width: 128px; }
.menus :nth-child(6) { width: 176px; }
.menus :nth-child(7) { width: 127px; }
.menus :nth-child(8) { width: 81px; }
.menus :nth-child(9) { width: 138px; }
.status { margin-left: 663px; display: flex; align-items: center; white-space: nowrap; padding-bottom: 1px; }
.status .dark { color: #1c1c1c; }
.status svg { margin-right: 36px; }
.status svg:nth-child(2) { margin-right: 30px; }
.status svg:nth-child(3) { margin-right: 39px; }
.status svg:nth-child(4) { margin-right: 41px; }
.status svg:nth-child(5) { margin-right: 34px; }
.status svg:nth-child(7) { margin-right: 38px; }
.status svg:nth-child(9) { margin-right: 33px; }
.status svg:nth-child(10) { margin-right: 29px; }
.date { width: 140px; letter-spacing: -.1px; }
.time { letter-spacing: 0; }

/* Windows */
.desktop { height: 1752px; }
.under-window { position: absolute; left: 0; top: 1690px; width: 2880px; height: 108px; background: linear-gradient(#111, #262626 60%); border: 2px solid #4b4b4b; border-radius: 0 0 20px 20px; }
.corner { position: absolute; left: 2800px; top: 1690px; width: 78px; height: 56px; background: linear-gradient(#777, #aaa); border-bottom: 2px solid #ccc; text-align: right; font: 34px "Open Sans", sans-serif; color: #555; padding: 18px 22px 0 0; line-height: 40px; }
.pct { color: #ddd; font-size: 26px; width: 36px; }
.back-window { position: absolute; left: 0; top: 49px; width: 2880px; height: 1653px; border: 2px solid #000; border-left-width: 0; border-right-width: 0; border-radius: 20px; overflow: hidden; background: #e6e6e6; display: flex; flex-direction: column; justify-content: flex-end; box-shadow: 0 0 0 1px #555; }
.back-window::after { content: ""; position: absolute; inset: auto 0 0 0; height: 60px; background: linear-gradient(transparent, rgba(0,0,0,.12)); }
.chart { width: 2880px; height: 180px; overflow: hidden; }
.axis text { font: 22px Roboto, sans-serif; fill: #777; }
.trades text { font: 24px Roboto, sans-serif; fill: #333; }
.price text { fill: #666; }
.browser { position: absolute; left: 10px; top: 58px; width: 2871px; height: 1474px; border-radius: 20px; overflow: hidden; background: #fff; display: flex; flex-direction: column;
  box-shadow: 0 0 0 1.5px #000; border-top: 2px solid #666; filter: drop-shadow(0 36px 36px rgba(0,0,0,.67)); }

/* Tab strip */
.tabs { height: 82px; background: #222; display: flex; flex: none; }
.lights { width: 186px; display: flex; gap: 16px; padding: 29px 0 0 42px; }
.lights i { width: 24px; height: 24px; border-radius: 50%; background: #777; }
.lights i:nth-child(2) { background: #a1a1a1; }
.lights i:nth-child(3) { background: #959595; }
.tab { width: 120px; height: 68px; margin-top: 14px; padding: 18px 16px 0; display: flex; color: #c8c8c8; font-size: 24px; line-height: 32px; background: linear-gradient(#555, #555) 100% 15px / 2px 40px no-repeat; }
.tab svg { width: 32px; height: 32px; margin-right: 16px; }
.tab span { width: 42px; overflow: hidden; letter-spacing: -.6px; flex: none; -webkit-mask-image: linear-gradient(90deg, #000 40%, transparent); mask-image: linear-gradient(90deg, #000 40%, transparent); }
.tab.last { background: none; }
.tab.active { background: #373737; border-radius: 16px 16px 0 0; position: relative; width: 122px; margin-right: -2px; }
.tab.active::before, .tab.active::after { content: ""; position: absolute; bottom: 0; width: 16px; height: 16px; }
.tab.active::before { left: -16px; background: radial-gradient(circle at 0 0, #222 15.5px, #373737 16px); }
.tab.active::after { right: -16px; background: radial-gradient(circle at 100% 0, #222 15.5px, #373737 16px); }
.tab.active span { width: 4px; margin-left: 1px; }
.tab.active svg.x { width: 17px; height: 17px; margin: 7px 0 0 13px; }
.plus { width: 24px; height: 24px; margin: 36px 0 0 34px; }

/* Toolbar */
.toolbar { height: 72px; background: #373737; display: flex; align-items: center; flex: none; }
.nav { display: flex; gap: 32px; width: 216px; padding-left: 28px; }
.nav svg { width: 32px; height: 32px; }
.omnibox { width: 1808px; height: 56px; border-radius: 28px; background: #222; display: flex; align-items: center; padding: 0 20px 0 28px; color: #8d8d8d; font-size: 28px; white-space: nowrap; }
.url { margin-left: 23px; letter-spacing: -.12px; }
.host { color: #fff; }
.star { width: 31px; height: 29px; margin-left: auto; }
.exts { display: flex; gap: 32px; margin-left: 27.500px; }
.ext { width: 32px; height: 32px; position: relative; }
.ext svg { width: 32px; height: 32px; }
.ext em { position: absolute; left: 19px; top: 20px; height: 24px; min-width: 24px; padding: 0 4px; border-radius: 4px; background: #666; color: #fff; font: 500 20px/25px "Liberation Sans", sans-serif; text-align: center; }
.ext em.black { background: #111; }
.ext em.light { background: #999; left: 16px; padding: 0 3px; }
.ext em.new { left: -10px; width: 52px; background: #777; padding: 0; font-size: 19px; }
.avatar { width: 44px; height: 44px; margin-left: 24px; }
.kebab { width: 6px; height: 28px; margin-left: 40px; }

/* Bookmarks */
.bookmarks { height: 66px; flex: none; background: #373737; border-bottom: 2px solid #232323; display: flex; padding: 12px 0 0 28px; color: #fff; font-size: 24px; line-height: 32px; letter-spacing: -.5px; white-space: nowrap; }
.bm { display: flex; gap: 16px; }
.bm svg { width: 32px; height: 32px; }
.b1 { width: 140px; }
.b2 { width: 260px; letter-spacing: .5px; }
.b3 { width: 152px; }
.b4 { width: 204px; }
.b5 { width: 166px; }
.b6 { width: 252px; }
.b7 { width: 288px; }

/* Article */
.page { position: relative; flex: 1; padding-left: 207px; font: 44.4px/86.8px "Noto Sans CJK KR", "Noto Sans", sans-serif; color: #222; white-space: nowrap; -webkit-text-stroke: .4px #222; }
.page > p { margin-bottom: 64.500px; }
.page > .lead { height: 77px; margin: 0; }
.lead mark { display: block; width: fit-content; height: 77px; line-height: 69px; background: #dcdcdc; color: inherit; }
.msg { display: flex; padding: 77px 0 0 401px; height: 426.500px; font: 23px/34.500px "DejaVu Sans"; font-stretch: condensed; color: #222; letter-spacing: .36px; filter: blur(.6px); -webkit-text-stroke: 0; }
.msg b { letter-spacing: -.35px; }
.logo { width: 78px; height: 80px; margin-right: 28px; }
.body { width: 832px; }
.head { display: flex; justify-content: space-between; color: #777; height: 45px; line-height: 38px; }
.meta { display: flex; color: #aaa; font-size: 20px; line-height: 36px; align-items: center; height: 36px; }
.meta b { margin: 0 18px 0 6px; }
.quote { border-left: 4px solid #aaa; padding-left: 18px; height: 62px; color: #777; line-height: 31px; margin-bottom: 22px; }
.quote b { display: block; line-height: 30px; }
.quote p { display: flex; color: #222; line-height: 48px; margin-top: -1px; }
.bolts { display: flex; align-items: center; gap: 6px; width: 76px; fill: #aaa; }
.bolts svg { width: 28px; height: 31px; }
.lk { width: 126px; }
.row { display: flex; align-items: center; gap: 8px; height: 34.500px; }
.row svg { width: 30px; height: 30px; }
.hash { color: #777; }
.thumb { position: absolute; right: -9px; top: 312px; width: 18px; height: 68px; border-radius: 9px; background: #7e7e7e; }
.cursor { position: absolute; left: 1534px; top: 955px; width: 18px; height: 34px; }

/* Dock */
.dock { position: absolute; left: 52px; top: 1702px; width: 2775px; height: 88px; border: 2px solid #565656; border-radius: 24px; background: linear-gradient(90deg, #2b2b2b, #303030 50%, #333 72%, #505050 92%, #555); display: flex; padding-left: 5px; }
.app { width: 69.300px; padding: 12px 0 0 7px; position: relative; flex: none; }
.app svg { width: 54px; height: 54px; }
.app svg.clip { overflow: hidden; border-radius: 13px; }
.app.run::after { content: ""; position: absolute; left: 30px; top: 74px; width: 8px; height: 8px; border-radius: 50%; background: #bbb; }
.app em { position: absolute; left: 43px; top: 6px; width: 24px; height: 24px; border-radius: 50%; background: #666; color: #fff; font: 18px/24px Inter, sans-serif; text-align: center; }
.dock hr { width: 2px; height: 64px; border: 0; background: #777; margin: 10px 15px 0 14px; flex: none; }
```
